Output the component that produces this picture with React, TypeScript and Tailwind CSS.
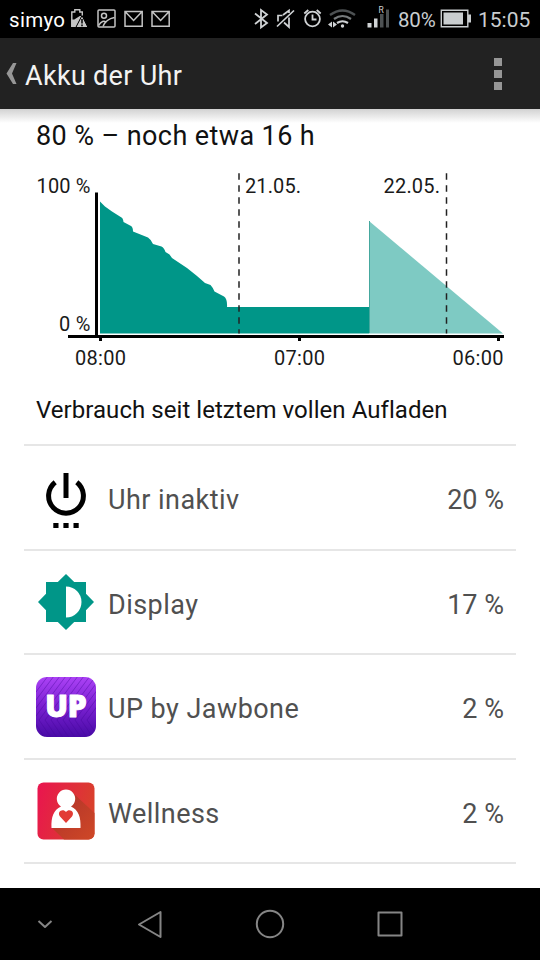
import type { ReactNode } from 'react';

const dischargePath =
  'M100 333.5V201.5L105 206.5L112 211.5L121.500 217.500Q123 218 123.500 222L131 226Q133 227 133 231.500L148 237.500Q150.500 239 153 244L161.500 246.500Q164 247.500 165.500 252L169.500 254.500L172 258L187 268L197 276L205 283L210.500 285Q212.500 287 214.500 291.500L224 296.500Q227.500 299 227 307H369V333.5Z';

const timeLabels = [
  { text: '08:00', x: 75, tick: 99 },
  { text: '07:00', x: 274, tick: 298 },
  { text: '06:00', x: 452.5, tick: 497 },
];

const days = [
  { text: '21.05.', x: 245, width: 56, line: 239 },
  { text: '22.05.', x: 383.5, width: 56.5, line: 446.5 },
];

function StatusIcons() {
  return (
    <svg width="106" height="38" viewBox="70 0 106 38" fill="none" stroke="#c4c4c4" strokeWidth="1.5">
      <path d="M71.8 27V12h3v-2.300h5V12h2.500v4" strokeWidth="1.4" />
      <path d="M71.3 19.500h3l5.500-3.500h2L76 27h-4.700z" fill="#c4c4c4" stroke="none" />
      <path d="M82 15.5l6 12H75.8z" fill="#c4c4c4" stroke="#000" strokeWidth="1" />
      <path d="M82 19v4.5M82 24.5v1.7" stroke="#000" />
      <rect x="98" y="10" width="17" height="17" rx="1" />
      <circle cx="104" cy="15.7" r="2.5" />
      <path d="M98.5 25.500c3-4.500 5.500-5 7.500-3.500M103 26.5c2-5 6-8 11.5-9" />
      <path d="M125 11.5h17.2v14.8H125zM125.5 12l8.1 8.5 8.1-8.5" />
      <path d="M152 11.5h17.2v14.8H152zM152.5 12l8.1 8.5 8.1-8.5" />
    </svg>
  );
}

function ConnectionIcons() {
  return (
    <svg width="138" height="38" viewBox="252 0 138 38" fill="none" stroke="#d0d3d5" strokeWidth="1.8">
      <path d="M255 13.5l12 9.500-6 4.500V10l6 4.500-12 9.500" />
      <path d="M277 26.5l17-16M278 21.500V15.500h4.500M283 15l6-4.500v2.500M284 22.500l5 4.500V17.500" strokeWidth="1.7" />
      <circle cx="312.5" cy="19" r="7.4" />
      <path d="M312.5 14.5V19.500h4M304.3 13.5l4-3.500M316.700 10l4 3.5" />
      <path d="M330 15q12.500-9 25 0" stroke="#4d5153" strokeWidth="2.4" />
      <path d="M334 19q8.500-6 17 0" stroke="#777b7d" strokeWidth="2.2" />
      <path d="M337 23q5.500-3.500 11 0" strokeWidth="2.2" />
      <circle cx="342.5" cy="26" r="1.7" fill="#d0d3d5" stroke="none" />
      <path d="M328 24.5l4-3v6zM337 24.5l-4-3v6z" fill="#d0d3d5" stroke="none" />
      <path d="M367.5 23h4v4.500h-4zM374 18.500h3.500v9H374z" fill="#d0d3d5" stroke="none" />
      <path d="M380 14h3.5v13.500H380zM386 9.500h3v18h-3z" fill="#4d5153" stroke="none" />
      <text x="378.5" y="12.5" fill="#d0d3d5" stroke="none" fontSize="8.5">R</text>
    </svg>
  );
}

function StatusBar() {
  return (
    <div className="flex h-[38px] items-center bg-black text-[21px] leading-[38px] text-[#c9cdcf]">
      <span className="w-[70px] pt-px pl-[9px] text-[20.5px] tracking-[0.3px] text-white">simyo</span>
      <StatusIcons />
      <div className="flex-1" />
      <ConnectionIcons />
      <span className="ml-2 w-[42px] pt-px text-[20.5px] tracking-[-0.2px]">80%</span>
      <svg width="32" height="38" viewBox="440 0 32 38">
        <path d="M441.3 10.3h26.500v16.400h-26.500z" fill="none" stroke="#c9cdcf" strokeWidth="1.4" />
        <path d="M443.5 12.5H463v12h-19.500zM468 14.500h3v8h-3z" fill="#c9cdcf" />
      </svg>
      <span className="w-[68px] pt-px pl-[6px]">15:05</span>
    </div>
  );
}

function ActionBar() {
  return (
    <header className="flex h-[71px] items-center bg-[#222] pr-[38px]">
      <svg width="25" height="71" viewBox="0 38 25 71">
        <path d="M13 63h3.500l-4.500 10.500 4.500 10.500H13L6.500 73.500z" fill="#969696" />
      </svg>
      <h1 className="flex-1 pt-[4px] text-[27px] leading-8 tracking-[0.3px] text-[#f3f3f3]">Akku der Uhr</h1>
      <div className="flex flex-col gap-1">
        <span className="size-2 bg-[#969696]" />
        <span className="size-2 bg-[#969696]" />
        <span className="size-2 bg-[#969696]" />
      </div>
    </header>
  );
}

function BatteryChart() {
  return (
    <svg className="block" width="540" height="220" viewBox="0 160 540 220" fontSize="20" fill="#1a1a1a">
      <path d={dischargePath} fill="#009688" />
      <path d="M369 221L503 333.5H369Z" fill="#7ecac3" />
      <path d="M369.5 221V333" stroke="#45a89e" strokeWidth="1" />
      {days.map((day) => (
        <g key={day.text}>
          <path d={`M${day.line} 173.3V333.5`} stroke="#222" strokeWidth="1.5" strokeDasharray="6.5 5.5" />
          <text x={day.x} y="192.5" textLength={day.width}>{day.text}</text>
        </g>
      ))}
      <path d="M95 192.5h3V335h406v3H68v-3h27z" fill="#000" />
      <text x="36.5" y="192.5" textLength="54">100 %</text>
      <text x="59" y="330.5" textLength="31.5">0 %</text>
      {timeLabels.map((label) => (
        <g key={label.text}>
          <path d={`M${label.tick} 337h3v4h-3z`} fill="#000" />
          <text x={label.x} y="364.5" textLength="51">{label.text}</text>
        </g>
      ))}
    </svg>
  );
}

function IdleIcon() {
  return (
    <svg width="60" height="62" viewBox="0 0 60 62">
      <path d="M19.2 16.2A17.400 17.400 0 1 0 40.8 16.2" fill="none" stroke="#000" strokeWidth="5" />
      <path d="M27.5 7h5v25h-5zM17.3 57h5.200v5h-5.200zM27.4 57h5.200v5h-5.200zM37.5 57h5.200v5h-5.200z" />
    </svg>
  );
}

function DisplayIcon() {
  return (
    <svg width="60" height="60" viewBox="0 0 60 60" fill="#009688">
      <path d="M30 2L38.2 10H50V21.800L58 30L50 38.200V50H38.200L30 58L21.800 50H10V38.200L2 30L10 21.800V10H21.800Z" />
      <path d="M30 14.5a15.500 15.500 0 0 1 0 31z" fill="#fff" />
    </svg>
  );
}

function UpIcon() {
  return (
    <svg className="mt-px" width="60" height="60" viewBox="0 0 60 60">
      <defs>
        <linearGradient id="up-bg" x1="0" y1="0" x2="0" y2="1">
          <stop offset="0" stopColor="#ac42f6" />
          <stop offset="0.5" stopColor="#7920d0" />
          <stop offset="1" stopColor="#480aa6" />
        </linearGradient>
        <clipPath id="up-clip">
          <rect width="60" height="60" rx="11" />
        </clipPath>
      </defs>
      <g clipPath="url(#up-clip)">
        <path d="M0 0h60v60H0z" fill="url(#up-bg)" />
        <g fill="none" stroke="#47089c" strokeOpacity="0.4" strokeWidth="1">
          <path d="M-6 15L9-5M-6 23L15-5M-6 31L21-5M-6 39L27-5M-3 43L33-5M3 43L39-5M9 43L45-5M15 43L51-5M21 43L57-5M27 43L63-5M33 43L65 0M39 43L65 8M45 43L65 16M51 43L65 24" />
          <path d="M-3 43L10 62M3 43L16 62M9 43L22 62M15 43L28 62M21 43L34 62M27 43L40 62M33 43L46 62M39 43L52 62M45 43L58 62M51 43L64 62" />
        </g>
        <text
          x="30"
          y="40"
          textAnchor="middle"
          fill="#fff"
          stroke="#fff"
          strokeWidth="1"
          strokeLinejoin="round"
          className="font-['Open_Sans',sans-serif] text-[30px] font-extrabold"
        >
          UP
        </text>
      </g>
    </svg>
  );
}

function WellnessIcon() {
  return (
    <svg width="60" height="60" viewBox="0 0 60 60">
      <defs>
        <linearGradient id="wellness-bg" x1="0" y1="0" x2="1" y2="0.3">
          <stop offset="0" stopColor="#ea1450" />
          <stop offset="1" stopColor="#d9402c" />
        </linearGradient>
        <linearGradient id="wellness-shadow" x1="0" y1="0" x2="1" y2="1">
          <stop offset="0.3" stopColor="#b8382a" />
          <stop offset="1" stopColor="#cf4826" />
        </linearGradient>
      </defs>
      <rect x="1.5" y="1.5" width="57" height="57" rx="6" fill="url(#wellness-bg)" />
      <path d="M37 12L58.5 32V52.500a6 6 0 0 1-6 6H28L16 47z" fill="url(#wellness-shadow)" />
      <path d="M15.500 47c-.5-11 2-18 9.500-21.500a9.200 9.200 0 1 1 10 0C42.500 29 45 36 44.500 47z" fill="#fff" />
      <path d="M30 42l-6-6.500c-3.500-5 3-8.500 6-4.500 3-4 9.500-.5 6 4.500z" fill="#e23b35" />
    </svg>
  );
}

const consumers: { name: string; value: string; icon: ReactNode }[] = [
  { name: 'Uhr inaktiv', value: '20 %', icon: <IdleIcon /> },
  { name: 'Display', value: '17 %', icon: <DisplayIcon /> },
  { name: 'UP by Jawbone', value: '2 %', icon: <UpIcon /> },
  { name: 'Wellness', value: '2 %', icon: <WellnessIcon /> },
];

function NavigationBar() {
  return (
    <nav className="h-[72px] bg-black">
      <svg width="540" height="72" viewBox="0 888 540 72" fill="none" stroke="#858585" strokeWidth="2" strokeLinejoin="round">
        <path d="M38.5 921l6.500 6 6.500-6" />
        <path d="M160.5 912v25L139 924.500z" />
        <circle cx="270" cy="924" r="13.2" />
        <path d="M378.5 912.5h23v23h-23z" />
      </svg>
    </nav>
  );
}

export default function App() {
  return (
    <div className="flex h-[960px] w-[540px] flex-col overflow-hidden bg-white font-['Roboto',sans-serif]">
      <StatusBar />
      <ActionBar />
      <main className="flex-1">
        <div className="h-[51px] bg-linear-to-b from-[#d2d2d2] via-white via-[14px] to-white pt-[10px] pl-9">
          <h2 className="text-[27px] leading-[34px] tracking-[0.4px] text-[#111]">80 % – noch etwa 16 h</h2>
        </div>
        <BatteryChart />
        <h3 className="h-[64px] pt-[14px] pl-9 text-[24px] leading-[32px] tracking-[0.05px] text-[#111]">
          Verbrauch seit letztem vollen Aufladen
        </h3>
        <ul className="mx-6 border-t-2 border-[#e6e6e6]">
          {consumers.map((item) => (
            <li
              key={item.name}
              className="flex h-[104.5px] items-center border-b-2 border-[#e6e6e6] px-3 text-[27px] text-[#505050]"
            >
              {item.icon}
              <span className="flex-1 pt-1.5 pl-3 tracking-[0.45px]">{item.name}</span>
              <span className="pt-1.5">{item.value}</span>
            </li>
          ))}
        </ul>
      </main>
      <NavigationBar />
    </div>
  );
}
